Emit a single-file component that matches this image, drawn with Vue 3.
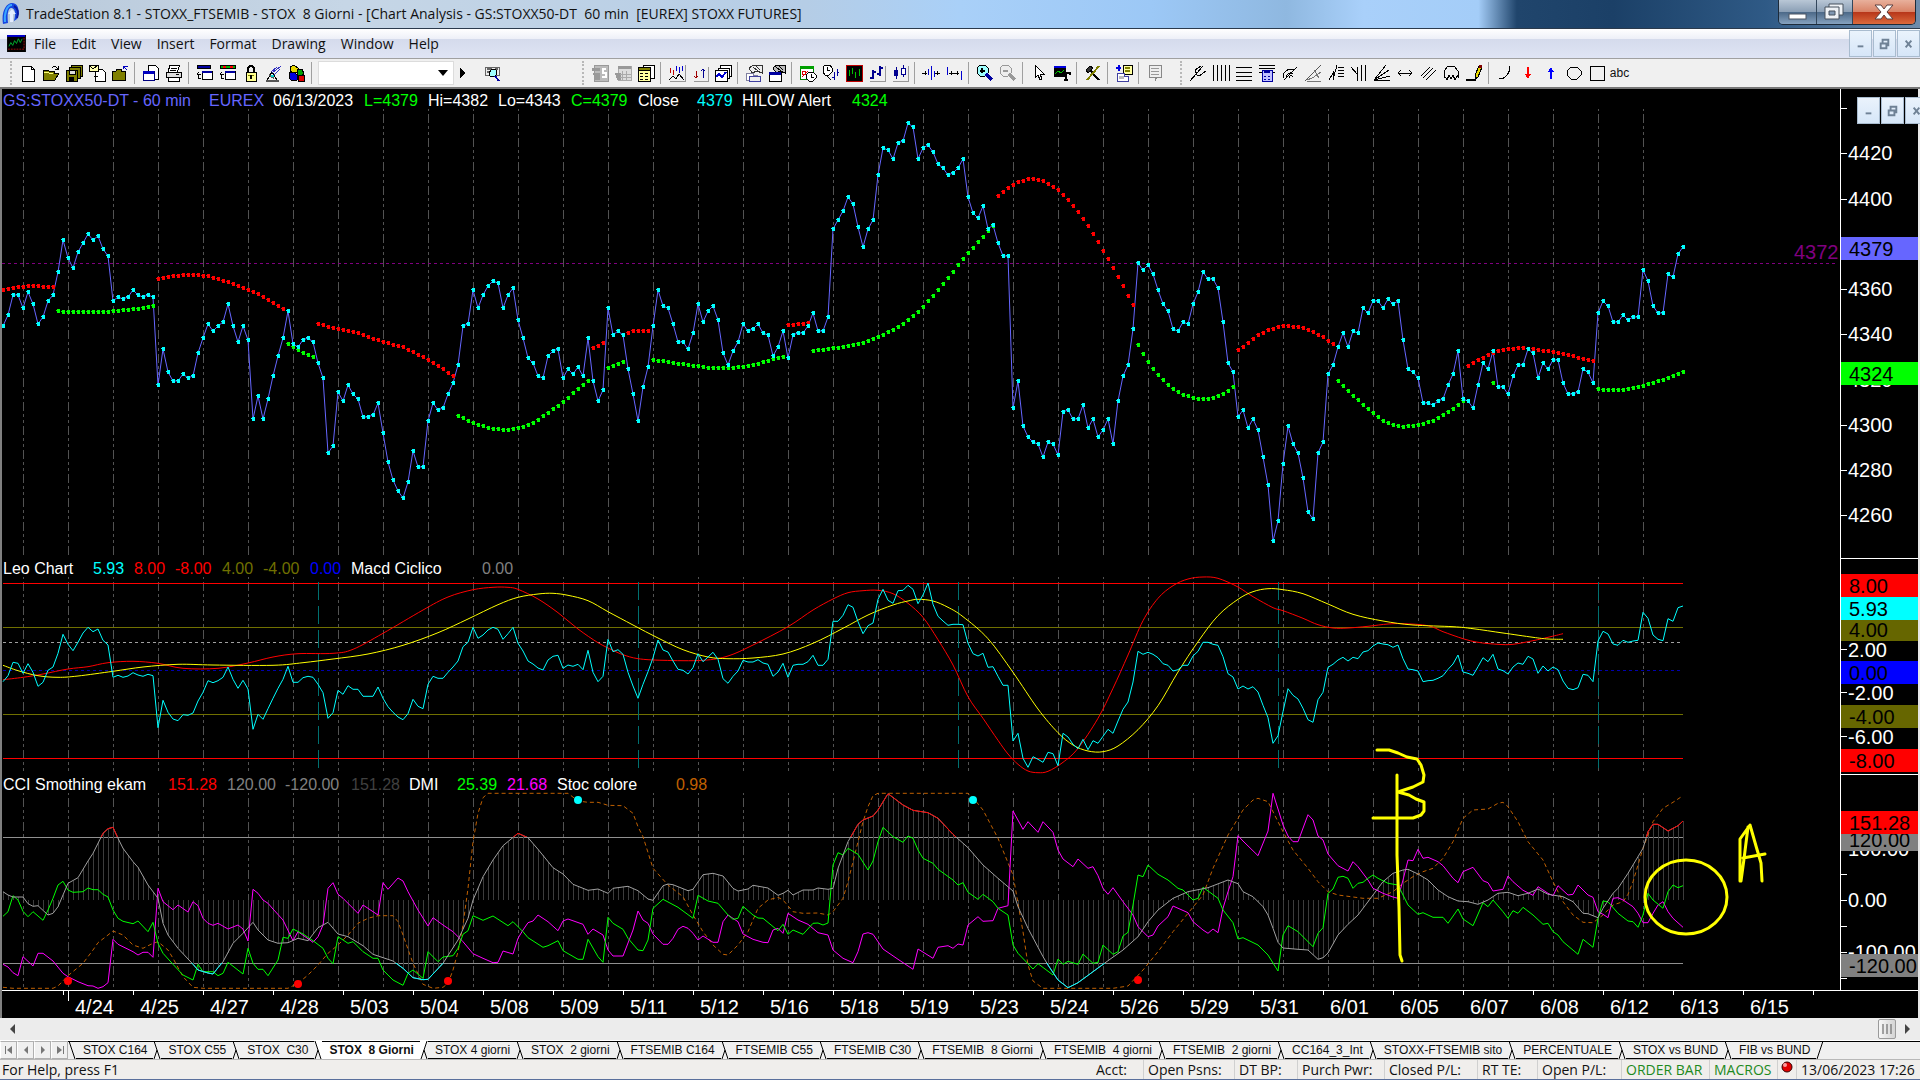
<template>
  <div class="app">
    <!-- title bar -->
    <header class="titlebar">
      <svg class="logo" viewBox="0 0 18 24" aria-hidden="true">
        <path d="M1 22C-1 10 4 1 10 1C17 1 18 10 15 17L12 19C14 11 13 6 9 6C6 6 5 13 6 21Z" fill="#1646e0" />
        <path d="M3 20C2 11 5 3 10 3" fill="none" stroke="#39a5ff" stroke-width="2" />
        <path d="M8 20V12H6L10 7L14 12H11V20Z" fill="#e4ecff" />
        <path d="M12 4C16 6 17 11 15 16" fill="none" stroke="#0a1aa0" stroke-width="2" />
      </svg>
      <h1 class="title">{{ title }}</h1>
      <div class="win-buttons">
        <button class="win-min" aria-label="Minimize">
          <svg viewBox="0 0 38 24"><rect x="10" y="14" width="17" height="5" fill="#fff" stroke="#4b5563" /></svg>
        </button>
        <button class="win-max" aria-label="Restore">
          <svg viewBox="0 0 36 24">
            <path d="M12 4H26V15H12Z" fill="#eef2f6" stroke="#46505c" />
            <path d="M8 7H22V19H8Z" fill="#eef2f6" stroke="#46505c" />
            <path d="M12 11H18V15H12Z" fill="#7f97b2" stroke="#46505c" />
          </svg>
        </button>
        <button class="win-close" aria-label="Close">
          <svg viewBox="0 0 62 24">
            <path d="M22 5H28L31 9L34 5H40L34 12L40 19H34L31 15L28 19H22L28 12Z" fill="#fff" stroke="#5c4040" />
          </svg>
        </button>
      </div>
    </header>

    <!-- menu -->
    <nav class="menubar">
      <svg class="doc-icon" viewBox="0 0 20 18" aria-hidden="true">
        <path d="M0 0H20V18H0Z" fill="#000" />
        <path d="M0 0H19V2H0Z" fill="#0000d0" />
        <path d="M2 12L4 8L6 11L8 6L10 9L12 4L14 8L16 4" fill="none" stroke="#00b030" />
        <path d="M1 15H18V3" fill="none" stroke="#a01010" stroke-dasharray="2 1" />
      </svg>
      <a v-for="m in menus" :key="m" href="#">{{ m }}</a>
      <div class="mdi-buttons">
        <button v-for="b in mdiButtons" :key="b.label" :aria-label="b.label">
          <svg viewBox="0 0 22 26"><path :d="b.d" fill="none" stroke="#6f8296" stroke-width="2" /></svg>
        </button>
      </div>
    </nav>

    <!-- toolbar -->
    <div class="toolbar">
      <template v-for="(group, g) in toolbar" :key="g">
        <span class="grip"></span>
        <template v-for="(name, n) in group" :key="n">
          <span v-if="name === '|'" class="sep"></span>
          <span v-else-if="name === 'combo'" class="combo">
            <select aria-label="Symbol"><option></option></select>
            <svg viewBox="0 0 10 6" aria-hidden="true"><path d="M0 0H10L5 6Z" /></svg>
          </span>
          <button v-else-if="name === 'abc'" class="tool abc">abc</button>
          <button v-else class="tool" :class="name" :aria-label="name">
            <svg viewBox="0 0 18 18" shape-rendering="crispEdges">
              <path
                v-for="(p, i) in icons[name]"
                :key="i"
                :d="p[0]"
                :fill="p[1]"
                :stroke="p[2] || 'none'"
                :stroke-width="p[3] || 1"
              />
            </svg>
          </button>
        </template>
      </template>
    </div>

    <!-- chart -->
    <main class="chart">
      <svg class="plot" viewBox="0 0 1920 929" role="img" aria-label="GS:STOXX50-DT 60 min">
        <defs>
          <clipPath id="above"><rect x="0" y="700" width="1840" height="48" /></clipPath>
          <clipPath id="below"><rect x="0" y="874" width="1840" height="28" /></clipPath>
        </defs>
        <rect width="1920" height="929" fill="#000" />

        <!-- grid -->
        <g stroke="#525252" stroke-dasharray="9 3 3 3 3 3" stroke-dashoffset="19" shape-rendering="crispEdges">
          <template v-for="x in gridX" :key="x">
            <line :x1="x + 0.5" :x2="x + 0.5" y1="20" y2="466" />
            <line :x1="x + 0.5" :x2="x + 0.5" y1="488" y2="683" />
            <line :x1="x + 0.5" :x2="x + 0.5" y1="704" y2="899" />
          </template>
        </g>

        <!-- price pane -->
        <line x1="2" x2="1838" y1="174.5" y2="174.5" stroke="#800080" stroke-dasharray="3 3" />
        <path :d="pricePath" class="line" stroke="#6666ff" />
        <path :d="dots(hiRed, 21)" fill="#ff0000" />
        <path :d="dots(hiGreen, 21)" fill="#00ff00" />
        <path :d="dots(pricePoints, 21)" fill="#00ffff" />
        <text x="1794" y="170" class="axis" fill="#800080">4372</text>

        <!-- Leo Chart pane -->
        <g shape-rendering="crispEdges">
          <line v-for="l in levels" :key="l.y" x1="3" x2="1683" :y1="l.y" :y2="l.y" :stroke="l.color" :stroke-dasharray="l.dash" />
          <line
            v-for="b in [63, 127, 191, 255, 319]"
            :key="b"
            :x1="barX(b) + 0.5"
            :x2="barX(b) + 0.5"
            y1="493"
            y2="680"
            stroke="#007070"
            stroke-dasharray="18 6"
          />
        </g>
        <path :d="smooth(cycleRed)" class="line" stroke="#ff0000" />
        <path :d="smooth(cycleYellow)" class="line" stroke="#ffff00" />
        <path :d="poly(leoPoints)" class="line" stroke="#00ffff" />

        <!-- CCI pane -->
        <path :d="histogram" stroke="#3c3c3c" shape-rendering="crispEdges" />
        <path :d="poly(stoc)" class="line" stroke="#c06000" stroke-dasharray="4 3" />
        <path :d="poly(dmiMinus)" class="line" stroke="#ff00ff" />
        <path :d="poly(dmiPlus)" class="line" stroke="#00ff00" />
        <path :d="poly(cci)" class="line" stroke="#a0a0a0" />
        <path :d="poly(cci)" class="line" stroke="#ff0000" clip-path="url(#above)" />
        <path :d="poly(cci)" class="line" stroke="#00ffff" clip-path="url(#below)" />
        <ellipse v-for="m in markers" :key="m.bar" :cx="barX(m.bar)" :cy="lowY(m.v)" rx="4" ry="4" :fill="m.color" />

        <!-- pane captions -->
        <text v-for="(c, i) in captions" :key="'c' + i" :x="c[0]" :y="c[1]" :fill="c[2]" class="caption">{{ c[3] }}</text>

        <!-- value axis -->
        <g stroke="#fff" shape-rendering="crispEdges">
          <line x1="1840.5" x2="1840.5" y1="0" y2="901" />
          <line x1="1840" x2="1918" y1="469.5" y2="469.5" />
          <line x1="1840" x2="1918" y1="685.5" y2="685.5" />
          <line x1="2" x2="1918" y1="901.5" y2="901.5" />
          <line v-for="y in axisTicks" :key="y" x1="1841" x2="1847" :y1="y" :y2="y" />
        </g>
        <text v-for="a in axisLabels" :key="a[1]" x="1848" :y="a[0] + 7" class="axis" fill="#fff">{{ a[1] }}</text>
        <g v-for="t in axisTags" :key="t.text">
          <rect x="1841" :y="t.y" width="77" height="23" :fill="t.color" />
          <text x="1849" :y="t.y + 19" class="axis" fill="#000">{{ t.text }}</text>
        </g>

        <!-- date axis -->
        <g stroke="#fff" shape-rendering="crispEdges">
          <line v-for="k in 26" :key="k" :x1="k * 70 - 6.5" :x2="k * 70 - 6.5" y1="901" y2="906" />
          <line x1="68.5" x2="68.5" y1="901" y2="912" />
        </g>
        <text v-for="(d, i) in dates" :key="d" :x="i ? 70 + i * 70 : 75" y="925" class="axis" fill="#fff">{{ d }}</text>

        <!-- hand-drawn notes -->
        <g fill="none" stroke="#ffff00" stroke-width="3" stroke-linecap="round" stroke-linejoin="round">
          <path d="M1377 661H1389L1398 664L1407 668L1417 670L1421 676L1424 686L1423 693L1413 698L1398 703L1409 706L1416 710L1424 713V722L1421 726L1413 729H1373" />
          <path d="M1397 686V766L1399 819L1400 866L1402 872" />
          <ellipse cx="1686" cy="808" rx="41" ry="37" />
          <path d="M1740 792V750L1750 736L1756 757L1761 774L1762 792M1741 792L1744 770L1748 738M1743 769L1765 765" />
        </g>

        <rect width="2" height="929" fill="#808080" />
        <rect x="1918" width="2" height="929" fill="#e8e8e8" />
      </svg>
      <div class="mdi-buttons floating">
        <button v-for="b in mdiButtons" :key="b.label" :aria-label="'Chart ' + b.label">
          <svg viewBox="0 0 22 26"><path :d="b.d" fill="none" stroke="#6f8296" stroke-width="2" /></svg>
        </button>
      </div>
    </main>

    <!-- horizontal scroll -->
    <div class="scroll">
      <button aria-label="Scroll left"><svg viewBox="0 0 6 10"><path d="M6 0V10L1 5Z" fill="#444" /></svg></button>
      <span class="track"></span>
      <button class="thumb" aria-label="Scroll position">
        <svg viewBox="0 0 10 10"><path d="M1 0V10M5 0V10M9 0V10" stroke="#555" /></svg>
      </button>
      <button aria-label="Scroll right"><svg viewBox="0 0 6 10"><path d="M0 0V10L5 5Z" fill="#444" /></svg></button>
    </div>

    <!-- workspace tabs -->
    <div class="tabs">
      <button v-for="n in navButtons" :key="n.label" class="nav" :aria-label="n.label">
        <svg viewBox="0 0 10 10"><path :d="n.d" fill="#777" /></svg>
      </button>
      <template v-for="(t, i) in tabs" :key="t">
        <svg class="slant" viewBox="0 0 8 18" aria-hidden="true">
          <path v-if="i === activeTab + 1" d="M0 0H8L1 18H0Z" fill="#fff" />
          <path v-if="i === activeTab" d="M0 0H8V18H7Z" fill="#fff" />
          <path :d="slant(i)" fill="none" stroke="#000" />
        </svg>
        <button class="tab" :class="{ active: i === activeTab }" @click="activeTab = i">{{ t }}</button>
      </template>
      <svg class="slant" viewBox="0 0 8 18" aria-hidden="true"><path d="M7 0L1 18" stroke="#000" /></svg>
    </div>

    <!-- status bar -->
    <footer class="status">
      <span class="help">For Help, press F1</span>
      <span v-for="s in status" :key="s.text" class="cell" :class="s.cls">{{ s.text }}</span>
      <span class="cell ball">
        <svg viewBox="0 0 12 14" aria-hidden="true">
          <circle cx="6" cy="7" r="5" fill="#e00000" stroke="#300" />
          <circle cx="4" cy="5" r="2" fill="#ff9a9a" />
        </svg>
      </span>
      <span class="cell clock">13/06/2023 17:26</span>
    </footer>
  </div>
</template>

<script setup>
import { ref, computed } from 'vue';

const title =
  'TradeStation 8.1 - STOXX_FTSEMIB - STOX  8 Giorni - [Chart Analysis - GS:STOXX50-DT  60 min  [EUREX] STOXX FUTURES]';
const menus = ['File', 'Edit', 'View', 'Insert', 'Format', 'Drawing', 'Window', 'Help'];

const mdiButtons = [
  { label: 'Minimize', d: 'M8 16H14' },
  { label: 'Restore', d: 'M7 13H13V18H7ZM9 12V9H15V15H14' },
  { label: 'Close', d: 'M8 10L14 17M14 10L8 17' },
];

const toolbar = [
  ['new', 'open', 'saveAll', 'mail', 'folder', '|', 'window', 'print', '|', 'stackBlue', 'stackColor', 'lock', 'satellite', 'cubes', '|', 'combo', 'play', 'find'],
  ['dataOff', 'tableOff', 'table', '|', 'indicator', 'arrows', 'strategy', '|', 'formatA', 'formatB', '|', 'calendar', 'clock', 'bars', 'ohlc', 'candle', '|', 'narrow', 'widen', '|', 'zoomIn', 'zoomOut', '|', 'pointer', 'textTool', '|', 'tools', '|', 'addWin', '|', 'note'],
  ['fork', 'vlines', 'hlines', 'calc', 'arc', 'fan', 'retrace', 'timeZones', 'gannFan', 'extend', 'parallel', 'cycle', 'pencil', '|', 'curve', 'arrowDown', 'arrowUp', 'circle', 'square', 'abc'],
];

// every icon is a list of [path, fill, stroke, stroke width]
const icons = {
  new: [['M3 2H12L15 5V17H3Z', '#fff', '#000'], ['M12 2V5H15', 'none', '#000']],
  open: [['M1 15V6H6L7 7H12V9H17L13 16H1Z', '#808000', '#000'], ['M2 8H5L7 9H11', 'none', '#ffff80'], ['M10 4C12 2 14 2 16 5M16 2V5H13', 'none', '#000']],
  saveAll: [['M6 1H17V12H6Z', '#808000', '#000'], ['M4 3H15V14H4Z', '#808000', '#000'], ['M1 6H12V17H1Z', '#808000', '#000'], ['M4 6H10V10H4Z', '#ddd', '#000'], ['M4 13H9V17H4Z', '#000']],
  mail: [['M7 5H14L17 8V17H7Z', '#fff', '#000'], ['M1 1H10V7H1Z', '#ffffb0', '#000'], ['M1 1L5 5L10 1M6 12H10', 'none', '#000']],
  folder: [['M1 7H5L6 5H10V7H14V16H1Z', '#808000', '#000'], ['M12 2H17M12 2V5M12 2L16 6', 'none', '#0000c0']],
  window: [['M6 1H13L16 4V15H6Z', '#fff', '#000'], ['M1 7H12V16H1Z', '#fff', '#000080'], ['M1 7H12V10H1Z', '#0000c0']],
  print: [['M5 1H15L12 8H3Z', '#fff', '#000'], ['M1 8H16V13H1Z', '#ddd', '#000'], ['M3 13H14V17H3Z', '#fff', '#000'], ['M6 4H12M5 6H11M11 10H14', 'none', '#000']],
  stackBlue: [['M1 1H14V4H1Z', '#0000a0', '#000'], ['M6 7H16V15H6Z', '#fff', '#000'], ['M6 7H16V9H6Z', '#0000a0'], ['M5 10H1M3 8L1 10L3 12M2 10V14H5', 'none', '#000']],
  stackColor: [['M1 1H16V4H1Z', '#00b000', '#000'], ['M4 2H7V4H4ZM11 2H14V4H11Z', '#ff0000'], ['M6 7H16V15H6Z', '#fff', '#000'], ['M6 7H16V9H6Z', '#0000a0'], ['M5 10H1M3 8L1 10L3 12M2 10V14H5', 'none', '#000']],
  lock: [['M6 8V4L8 2H10L12 4V8', 'none', '#000', 2], ['M4 8H14V17H4Z', '#ffff90', '#000'], ['M6 11H12V12H6Z', '#808000'], ['M8 11H10V15H8Z', '#000']],
  satellite: [['M2 16L7 8L12 16Z', 'none', '#000'], ['M6 8L12 3M9 11L15 5M7 9L16 2', 'none', '#3030c0'], ['M4 11L9 14M1 17H14', 'none', '#555', 2], ['M6 11H9V13H6Z', '#00d0d0']],
  cubes: [['M2 3L6 1L10 4V8L5 9L2 7Z', '#e8d800', '#000'], ['M9 6L14 5L16 10L12 13L9 11Z', '#00a000', '#000'], ['M1 9L6 8L9 11V16L4 17L1 14Z', '#0000e0', '#000'], ['M10 11H16V17H10Z', '#e00000', '#000']],
  play: [['M6 4L11 9L6 14Z', '#000']],
  find: [['M2 3H16V11H2Z', '#eee', '#666'], ['M4 5H9M4 8H8M12 5H15', 'none', '#666', 2], ['M6 9L9 5L13 6L14 10L11 13L7 12Z', '#a0ffff', '#000'], ['M12 12L16 17', 'none', '#0000a0', 2]],
  dataOff: [['M3 1H17V17H3Z', '#bbb', '#999'], ['M1 4H9V7H1ZM2 9H9V16H4Z', '#999'], ['M15 5H12V9H15V13H11', 'none', '#fff', 2]],
  tableOff: [['M4 2H17V16H4Z', '#ddd', '#aaa'], ['M4 2H17V5H4ZM1 9H7V16H3Z', '#999'], ['M8 7V16M12 7V16M6 10H17M6 13H17', 'none', '#aaa']],
  table: [['M6 1H17V14H6Z', '#fff', '#000'], ['M1 4H13V17H1Z', '#ffffa0', '#000'], ['M1 3H13V6H1Z', '#808000', '#000'], ['M3 9H6M8 9H11M3 12H6M8 12H11M3 15H6M8 15H11', 'none', '#000']],
  indicator: [['M17 1V17H2', 'none', '#999'], ['M2 4V9M5 6V11', 'none', '#c00000'], ['M8 2V7M11 3V9M14 2V7', 'none', '#0000d0'], ['M1 16L5 12L8 15L11 10L16 16', 'none', '#000']],
  arrows: [['M17 3V17H3', 'none', '#999'], ['M5 7V14M3 12L5 14L7 12', 'none', '#a00000'], ['M12 14V5M10 7L12 5L14 7', 'none', '#000090']],
  strategy: [['M6 1H17V12H6Z', '#fff', '#000'], ['M4 4H15V14H4Z', '#fff', '#000'], ['M1 6H13V17H1Z', '#fff', '#000'], ['M2 13L5 10L8 13L12 8', 'none', '#0000d0', 2]],
  formatA: [['M4 4L9 1H17V9L12 7L7 9Z', '#eee', '#333'], ['M1 9H8V11H12V16H1Z', '#fff', '#8080a0'], ['M4 12H15V17H4Z', '#eee', '#4040a0'], ['M8 3L13 7M11 2L15 6', 'none', '#333']],
  formatB: [['M5 4L9 1H17V9L12 7L8 9Z', '#bbb', '#000'], ['M1 8H13V17H1Z', '#fff', '#000'], ['M1 8H13V11H1Z', '#0000a0'], ['M8 3L13 7M11 2L15 6', 'none', '#000']],
  calendar: [['M1 3H14V15H1Z', '#fff', '#008000'], ['M1 2H15V5H1Z', '#00a000'], ['M3 7H6V10H3ZM3 13L9 7', 'none', '#e00000'], ['M10 8H14L17 11V14L14 17H10L7 14V11Z', '#fff', '#000'], ['M12 10V13H15', 'none', '#000']],
  clock: [['M3 1H8L10 4V8L7 11H3L1 8V3Z', '#fff', '#000'], ['M5 3V6H8M4 11L9 16', 'none', '#000'], ['M12 8V16M15 5V12M10 13H12M15 8H17', 'none', '#0000a0']],
  bars: [['M1 1H17V17H1Z', '#000', '#c00000'], ['M4 6V12M7 4V10M10 8V14M14 5V12', 'none', '#00c000']],
  ohlc: [['M17 2V17H2', 'none', '#999'], ['M5 6V15M2 14H5M5 8H8M12 2V12M9 10H12M12 4H15', 'none', '#000090', 2]],
  candle: [['M17 2V17H2', 'none', '#999'], ['M5 3V15M12 1V13', 'none', '#000090'], ['M3 6H7V12H3Z', '#000090'], ['M10 4H14V10H10Z', '#fff', '#000090']],
  narrow: [['M9 2V16', 'none', '#0000d0'], ['M6 5V11M12 7V13', 'none', '#0000d0'], ['M0 9H5M3 7V11M18 9H13M15 7V11', 'none', '#000']],
  widen: [['M2 3V11M16 7V16', 'none', '#0000d0'], ['M4 9H14M6 7V11M12 7V11', 'none', '#000']],
  zoomIn: [['M4 1H9L12 4V9L9 12H4L1 9V4Z', '#a0ffff', '#000'], ['M6 4V9M4 7H9', 'none', '#000', 2], ['M10 10L16 16', 'none', '#0000a0', 3]],
  zoomOut: [['M4 1H9L12 4V9L9 12H4L1 9V4Z', '#eee', '#999'], ['M4 7H9', 'none', '#999', 2], ['M10 10L16 16', 'none', '#999', 3]],
  pointer: [['M5 1V14L8 11L10 16L12 15L10 10H14Z', '#fff', '#000']],
  textTool: [['M1 2H13V13H1Z', '#000'], ['M1 2H13V4H1Z', '#0000e0'], ['M2 10L5 7L8 9L11 6', 'none', '#00c000'], ['M9 9H17V11M13 9V17M11 16H15', 'none', '#000', 2]],
  tools: [['M4 4L15 16', 'none', '#000', 2], ['M15 2L3 16', 'none', '#808000', 2], ['M2 6L6 2L9 4L4 9Z', '#333', '#000']],
  addWin: [['M8 1H17V10H8Z', '#ffffa0', '#000'], ['M10 4H15M10 7H15', 'none', '#808000', 2], ['M1 4H6M4 1V7', 'none', '#0000e0', 2], ['M2 9H9V12H13V17H2Z', '#fff', '#4040a0'], ['M4 12H9V15H4Z', '#bbb']],
  note: [['M3 1H15V13H11L9 17V13H3Z', '#eee', '#888'], ['M5 4H13M5 7H13M5 10H13', 'none', '#999']],
  fork: [['M1 17L8 9M8 9L14 2M6 6L12 2M10 12L17 7M6 6L8 11L10 12', 'none', '#000']],
  vlines: [['M1 1V17M5 1V17M9 1V17M13 1V17M17 1V17', 'none', '#000']],
  hlines: [['M1 3H17M1 8H17M1 12H17M1 16H17', 'none', '#000']],
  calc: [['M1 1H17M1 4H17M1 8H4M14 8H17', 'none', '#000'], ['M4 6H14V17H4Z', '#c0c0ff', '#0000a0'], ['M6 8H12', 'none', '#0000a0', 2], ['M6 12H8M10 12H12M6 15H8M10 15H12', 'none', '#0000a0']],
  arc: [['M2 14C2 6 9 4 13 6M5 14C5 9 10 8 12 10M8 14C8 11 11 11 12 13M3 16L16 3', 'none', '#000']],
  fan: [['M1 17L17 1', 'none', '#555'], ['M3 16L8 14L13 11L17 8M3 17H17M10 6L15 14', 'none', '#777']],
  retrace: [['M2 16L6 9V16L10 1M11 3H17M11 6H17M11 9H17M11 12H17', 'none', '#000']],
  timeZones: [['M1 3L7 10M7 3V17M11 1V17M15 1V17', 'none', '#000']],
  gannFan: [['M1 16L13 1M1 16L16 6M1 16L17 12M1 16H17', 'none', '#000']],
  extend: [['M2 9H16M5 6L2 9L5 12M13 6L16 9L13 12', 'none', '#000']],
  parallel: [['M2 12L11 3M4 14L14 4M7 16L17 6', 'none', '#000']],
  cycle: [['M2 14V7L6 2H12L16 7V14M2 11L5 16L7 11L9 15L11 11L13 16L16 11', 'none', '#000']],
  pencil: [['M10 11L14 2L17 3L13 13L10 15Z', '#e8d800', '#000'], ['M14 1H17V4H14Z', '#800000'], ['M1 16H10L11 14', 'none', '#000', 2]],
  curve: [['M14 2C14 9 10 15 3 15', 'none', '#000']],
  arrowDown: [['M8 3H10V10H12L9 15L6 10H8Z', '#ff0000']],
  arrowUp: [['M8 15H10V8H12L9 3L6 8H8Z', '#0000ff']],
  circle: [['M6 3H12L16 7V11L12 15H6L2 11V7Z', 'none', '#000']],
  square: [['M2 2H16V16H2Z', 'none', '#000']],
};

const navButtons = [
  { label: 'First', d: 'M1 1H2V9H1ZM8 1V9L3 5Z' },
  { label: 'Previous', d: 'M7 1V9L3 5Z' },
  { label: 'Next', d: 'M3 1V9L7 5Z' },
  { label: 'Last', d: 'M2 1V9L7 5ZM8 1H9V9H8Z' },
];

const activeTab = ref(3);
const tabs = [
  'STOX C164', 'STOX C55', 'STOX  C30', 'STOX  8 Giorni', 'STOX 4 giorni', 'STOX  2 giorni',
  'FTSEMIB C164', 'FTSEMIB C55', 'FTSEMIB C30', 'FTSEMIB  8 Giorni', 'FTSEMIB  4 giorni', 'FTSEMIB  2 giorni',
  'CC164_3_Int', 'STOXX-FTSEMIB sito', 'PERCENTUALE', 'STOX vs BUND', 'FIB vs BUND',
];

// the tab on top shows its whole edge, its neighbour only the lower half
const slant = (i) => {
  if (i === 0) return 'M1 0L7 18';
  if (i === activeTab.value + 1) return 'M7 0L1 18M4 9L7 18';
  return 'M1 0L7 18M4 9L1 18';
};

const status = [
  { text: 'Acct:', cls: 'acct' },
  { text: 'Open Psns:', cls: 'psns' },
  { text: 'DT BP:', cls: 'dtbp' },
  { text: 'Purch Pwr:', cls: 'purch' },
  { text: 'Closed P/L:', cls: 'closed' },
  { text: 'RT TE:', cls: 'rtte' },
  { text: 'Open P/L:', cls: 'openpl' },
  { text: 'ORDER BAR', cls: 'order' },
  { text: 'MACROS', cls: 'macros' },
];

const dates = [
  '4/24', '4/25', '4/27', '4/28', '5/03', '5/04', '5/08', '5/09', '5/11', '5/12', '5/16', '5/18', '5/19',
  '5/23', '5/24', '5/26', '5/29', '5/31', '6/01', '6/05', '6/07', '6/08', '6/12', '6/13', '6/15',
];

// scales: one bar every 5px, vertical samples are thirds of a pixel
const barX = (i) => 3 + 5 * i;
const lowY = (v) => 466 + v / 3;
const gridX = Array.from({ length: 37 }, (_, k) => 23 + 45 * k);

const price = [
  648, 615, 555, 555, 594, 546, 582, 642, 621, 573, 555, 486, 390, 444, 474, 426, 399, 372, 390, 378, 417, 438,
  573, 561, 567, 561, 540, 555, 561, 555, 561, 825, 717, 786, 813, 813, 792, 804, 798, 729, 684, 642, 663, 648,
  636, 582, 648, 696, 648, 690, 927, 858, 927, 867, 798, 738, 684, 603, 702, 711, 690, 684, 696, 759, 804, 1029,
  1008, 846, 873, 825, 852, 867, 921, 921, 915, 879, 969, 1056, 1110, 1143, 1164, 1116, 1023, 1071, 1071, 933,
  879, 900, 894, 852, 819, 765, 648, 642, 540, 594, 555, 528, 513, 519, 594, 555, 534, 630, 684, 744, 759, 798,
  804, 738, 723, 717, 804, 777, 792, 771, 798, 684, 813, 873, 840, 594, 675, 663, 675, 777, 852, 933,
  831, 771, 648, 540, 588, 594, 642, 696, 696, 717, 669, 582, 636, 603, 588, 630, 729, 765, 723, 696, 642, 663,
  657, 642, 669, 675, 738, 711, 663, 744, 675, 669, 669, 648, 609, 663, 663, 621, 357, 330, 303, 261, 282, 351,
  411, 357, 330, 195, 114, 120, 147, 99, 93, 39, 51, 147, 114, 105, 126, 162, 174, 195, 189, 174, 147, 261, 309,
  324, 288, 357, 345, 399, 438, 438, 894, 813, 948, 981, 996, 1002, 1041, 996, 1002, 1035, 906, 900, 927, 927,
  885, 954, 927, 981, 960, 927, 1002, 873, 798, 765, 657, 459, 480, 465, 492, 540, 582, 603, 657, 663, 636, 642,
  582, 546, 486, 507, 507, 534, 636, 759, 786, 921, 900, 954, 927, 960, 1041, 1125, 1293, 1233,
  1062, 948, 1002, 1029, 1104, 1206, 1227, 1029, 996, 792, 765, 711, 669, 711, 663, 669, 594, 609, 573, 573, 594,
  567, 582, 573, 690, 777, 786, 804, 879, 879, 885, 873, 867, 825, 792, 723, 867, 873, 894, 825, 759, 777, 723,
  831, 831, 852, 798, 765, 765, 717, 729, 804, 759, 777, 750, 750, 819, 852, 852, 846, 777, 786, 819, 609, 573,
  588, 636, 636, 615, 630, 621, 621, 480, 513, 588, 609, 609, 492, 501, 432, 411,
];

const leo = [
  380, 362, 322, 325, 355, 326, 352, 394, 382, 346, 336, 295, 238, 268, 287, 262, 234, 217, 230, 222, 256, 270,
  367, 361, 367, 363, 353, 360, 364, 358, 362, 518, 436, 472, 492, 497, 479, 481, 474, 438, 412, 377, 383, 377,
  367, 336, 373, 400, 376, 402, 523, 478, 493, 461, 430, 400, 373, 334, 382, 382, 368, 364, 367, 388, 413, 490,
  473, 406, 418, 392, 403, 403, 424, 424, 424, 396, 430, 455, 472, 486, 494, 476, 433, 454, 461, 388, 364, 370,
  370, 352, 336, 318, 275, 262, 217, 250, 240, 225, 217, 223, 253, 236, 217, 265, 288, 318, 327, 339, 345, 315,
  304, 301, 340, 330, 334, 328, 344, 286, 352, 380, 364, 253, 290, 284, 298, 352, 393, 430,
  388, 350, 308, 255, 285, 291, 318, 343, 346, 357, 338, 296, 320, 306, 292, 313, 371, 385, 364, 348, 316, 321,
  321, 314, 324, 328, 364, 351, 325, 367, 331, 328, 328, 320, 301, 331, 331, 313, 199, 199, 181, 149, 157, 200,
  236, 212, 204, 133, 103, 136, 145, 107, 106, 91, 103, 146, 120, 84, 148, 184, 198, 211, 208, 208, 209, 265,
  296, 303, 295, 337, 335, 364, 391, 391, 558, 535, 610, 637, 605, 613, 622, 592, 596, 632, 535, 546, 568, 581,
  553, 584, 557, 565, 544, 523, 535, 498, 463, 441, 381, 289, 298, 292, 298, 308, 326, 331, 348, 344, 331, 331,
  303, 289, 262, 262, 268, 271, 305, 356, 366, 402, 393, 402, 395, 411, 451, 488, 565, 542,
  470, 401, 421, 432, 460, 494, 502, 434, 412, 337, 328, 315, 307, 318, 307, 311, 291, 287, 273, 264, 267, 269,
  277, 270, 311, 342, 344, 348, 380, 377, 376, 370, 362, 343, 327, 300, 351, 355, 361, 335, 308, 320, 298, 342,
  347, 357, 336, 324, 328, 304, 312, 355, 333, 348, 336, 344, 378, 400, 404, 398, 358, 361, 380, 258, 229, 237,
  267, 271, 256, 262, 258, 256, 172, 190, 240, 253, 257, 191, 199, 158, 153,
];

// "bar:value bar:value ..." -> [[bar, value], ...]
const parse = (s) => s.trim().split(/\s+/).map((p) => p.split(':').map(Number));

// fill the bars between the given ones
const fill = (knots) => {
  const out = [];
  for (let k = 0; k < knots.length - 1; k++) {
    const [a, va] = knots[k];
    const [b, vb] = knots[k + 1];
    for (let i = a; i < b; i++) out.push([i, va + ((vb - va) * (i - a)) / (b - a)]);
  }
  out.push(knots[knots.length - 1]);
  return out;
};

const hiRed = [
  '0:540 3:531 5:528 7:528 8:531 10:531',
  '31:507 34:498 36:495 39:495 41:498 43:507 46:522 50:545 52:561 54:579 56:597',
  '63:642 67:657 71:670 76:696 80:711 84:741 87:768 90:798',
  '118:714 120:699',
  '125:669 126:663 129:663',
  '157:645 159:642 160:642 161:639',
  '199:258 201:234 203:216 205:207 206:207 208:212 210:230 211:240 213:270 215:306 217:348 219:396 221:447 223:501 226:585',
  '247:720 249:699 251:675 253:660 255:651 256:648 258:650 260:654 262:666 264:681 265:693 266:702',
  '293:768 295:750 297:735 299:723 301:717 303:714 304:714 307:720 310:725 313:735 316:747 318:753',
].flatMap((s) => fill(parse(s)));

const hiGreen = [
  '11:603 13:606 21:606 24:600 28:594 30:588',
  '57:702 60:729 62:741',
  '91:918 94:939 97:954 100:960 101:960 104:951 106:939 109:909 112:876 115:837 117:813',
  '121:774 124:756',
  '130:750 133:756 137:765 141:773 145:774 148:771 151:762 154:747 156:741',
  '162:723 165:717 168:711 172:699 176:675 180:642 183:606 186:558 189:504 192:447 195:396 197:363 198:348',
  '227:705 228:732 230:777 232:810 234:837 236:855 239:867 241:867 243:858 245:843 246:831',
  '267:813 270:858 273:897 276:933 278:945 280:951 283:945 286:933 288:915 290:897 292:873',
  '298:819',
  '319:837 320:840 324:840 327:831 330:819 333:804 336:786',
].flatMap((s) => fill(parse(s)));

const cycleRed = parse(`
  0:374 4:367 8:357 13:342 17:335 21:323 26:319 31:325 36:340 43:340 49:324 54:306 59:296 66:295 70:283 76:235
  84:165 89:126 94:104 98:97 101:97 103:103 107:132 111:173 115:222 119:263 122:286 124:299 127:311 132:316
  140:316 145:303 150:270 157:215 162:165 166:132 169:113 172:107 175:106 178:116 181:145 184:187 187:254
  190:330 193:425 196:490 199:556 201:597 203:628 205:648 207:653 209:649 212:622 215:580 219:490 222:400
  225:300 228:197 231:130 234:92 237:72 240:66 243:70 247:96 250:125 254:158 256:167 260:190 263:209 266:219
  269:219 273:214 277:207 280:206 285:212 288:230 292:251 295:262 299:268 302:268 306:257 309:247 312:236`);

const cycleYellow = parse(`
  0:331 3:347 7:362 11:367 15:363 22:349 28:336 35:328 42:330 54:331 60:323 66:312 73:297 80:271 87:233 93:192
  99:149 103:127 107:117 110:115 113:121 117:137 121:170 126:210 131:249 136:284 141:306 145:311 150:309
  156:297 162:265 168:220 173:180 178:150 181:138 183:133 186:138 189:157 192:185 197:251 202:352 207:462
  211:533 214:570 217:588 220:590 223:573 227:524 231:452 235:351 239:260 243:182 247:133 250:110 253:101
  256:104 260:116 265:147 270:178 276:198 282:210 290:215 294:221 300:234 306:247 309:252 312:253`);

const cci = parse(`
  0:1010 1:1020 2:1026 4:1026 5:1046 6:1054 7:1052 9:1080 10:1075 11:1055 13:985 15:968 17:918 18:895 20:835
  21:821 22:817 23:850 24:880 26:920 27:937 29:990 31:1030 32:1105 33:1140 35:1180 38:1228 39:1245 41:1254
  42:1257 43:1238 44:1220 46:1165 48:1135 50:1102 51:1125 53:1155 55:1165 57:1163 59:1150 61:1157 63:1118
  65:1102 67:1137 69:1145 72:1172 74:1198 78:1218 80:1240 82:1268 84:1274 85:1273 88:1225 91:1155 93:1090
  94:1035 96:965 98:915 100:872 103:835 105:848 107:883 110:938 112:957 114:988 117:1006 119:1002 121:1015
  122:1000 125:994 127:1007 129:1032 130:1036 132:992 133:987 134:989 137:1007 138:1003 140:959 142:955
  144:963 146:1000 147:1008 149:1002 150:991 153:999 155:1021 156:1015 157:1006 158:1020 160:1005 162:1005
  163:999 165:1003 166:1000 167:940 169:860 171:808 172:795 174:783 175:765 177:716 180:750 182:766 185:773
  187:790 190:838 193:878 196:930 199:970 202:1008 203:1055 205:1120 208:1205 209:1230 211:1275 213:1298
  215:1283 218:1250 221:1217 224:1185 227:1145 229:1100 231:1065 234:1030 237:1010 241:998 245:975 247:986
  248:1010 250:1025 252:1055 253:1080 254:1120 255:1162 256:1179 259:1183 261:1185 263:1213 264:1208 265:1194
  267:1140 269:1108 271:1080 273:1040 275:1000 276:980 278:955 280:945 281:943 283:957 285:975 287:1005
  289:1025 291:1038 293:1040 295:1048 297:1035 299:1015 301:1012 303:1022 305:1015 307:1002 309:1018 312:1025
  314:1040 316:1075 317:1076 319:1088 320:1060 322:1015 323:1000 325:955 328:880 329:830 330:808 331:808
  333:828 335:812 336:798`);

const dmiPlus = parse(`
  0:1084 1:1070 2:1022 3:1035 4:1069 5:1085 6:1070 8:1096 9:1065 10:1030 11:990 12:979 13:1005 14:1012 16:1010
  17:999 18:1004 19:1004 20:1018 21:1026 22:1065 23:1090 24:1099 26:1106 27:1098 29:1130 30:1102 31:1165
  32:1195 34:1228 36:1260 38:1275 39:1228 40:1250 42:1250 43:1262 44:1255 45:1222 48:1257 49:1180 50:1225
  51:1243 52:1243 53:1262 55:1215 56:1147 57:1150 58:1122 60:1137 62:1157 64:1180 65:1210 66:1226 67:1145
  69:1165 70:1160 72:1190 74:1210 75:1210 76:1245 78:1275 80:1291 81:1255 82:1245 84:1270 85:1190 87:1220
  88:1206 90:1202 91:1180 92:1138 93:1127 94:1082 96:1096 98:1083 101:1112 102:1100 104:1130 105:1148 108:1177
  109:1172 111:1157 112:1187 115:1213 116:1213 117:1153 119:1205 120:1222 121:1087 122:1105 124:1123 125:1150
  127:1185 128:1187 129:1155 130:1060 132:1033 135:1057 138:1090 139:1021 141:1038 143:1045 145:1080 146:1093
  147:1090 148:1054 150:1080 151:1089 152:1090 155:1127 156:1108 157:1138 158:1125 160:1138 162:1105 163:1104
  164:1110 165:1104 166:930 167:893 168:900 169:880 171:898 173:945 174:918 175:860 176:817 178:845 180:862
  181:843 182:850 183:885 184:910 186:925 187:943 190:975 191:990 192:983 193:1012 195:1033 196:1018 198:1040
  199:1060 201:1080 202:1170 203:1195 206:1242 207:1226 210:1260 211:1212 212:1228 213:1219 215:1228 216:1197
  218:1225 219:1222 220:1170 222:1198 223:1190 224:1143 225:1132 226:1050 227:960 228:965 229:930 231:958
  233:975 235:1000 236:1005 238:1035 239:1030 240:997 243:1030 244:1065 246:1103 247:1152 248:1148 251:1170
  253:1200 255:1248 256:1140 257:1112 259:1130 262:1175 263:1135 264:1118 265:1015 266:1002 267:967 268:964
  269:970 270:1000 271:985 272:982 273:970 274:960 275:970 277:985 279:990 280:1020 281:1050 283:1078 284:1073
  286:1087 288:1087 289:1105 291:1062 292:1092 294:1112 296:1043 297:1055 298:1035 300:1070 301:1090 302:1067
  303:1075 304:1057 306:1080 308:1108 309:1105 310:1130 311:1140 312:1160 315:1198 316:1153 318:1177 319:1090
  320:1038 321:1040 323:1075 325:1098 326:1100 327:1117 328:1080 329:1015 330:1035 332:1060 333:1010 334:990
  335:998 336:992`);

const dmiMinus = parse(`
  0:1228 1:1236 2:1253 3:1262 4:1205 6:1233 7:1195 8:1195 10:1218 12:1255 13:1265 15:1280 17:1292 18:1293
  19:1300 20:1295 21:1283 22:1153 23:1168 26:1190 27:1200 28:1192 29:1192 30:1207 31:1000 32:1040 34:1064
  35:1050 37:1071 38:1040 39:1052 40:1090 41:1105 42:1111 43:1105 45:1122 47:1110 48:1122 49:1158 50:1003
  51:1015 52:1035 53:1045 54:1062 56:1095 58:1157 59:1130 62:1162 63:1145 64:1110 65:1000 66:983 67:1018
  68:1030 70:1060 71:1075 72:1050 75:1080 76:983 77:1003 79:969 80:978 81:1010 83:1065 85:1113 86:1088 88:1110
  90:1130 92:1160 94:1196 96:1210 98:1223 99:1222 100:1188 102:1197 103:1150 104:1125 105:1103 106:1098
  107:1080 109:1100 111:1127 112:1098 113:1092 116:1108 117:1138 118:1122 120:1140 121:1185 122:1203 124:1203
  126:1125 127:1068 128:1095 129:1105 130:1137 132:1168 133:1168 134:1150 135:1123 136:1114 137:1120 138:1135
  139:1155 140:1143 142:1162 143:1162 144:1100 145:1080 147:1100 148:1137 150:1153 152:1162 153:1163 154:1125
  155:1120 156:1135 157:1075 159:1095 161:1108 163:1133 165:1140 166:1185 168:1210 170:1223 171:1190 172:1137
  173:1133 174:1138 176:1182 179:1213 182:1243 183:1182 186:1210 187:1177 189:1172 190:1180 191:1167 192:1170
  193:1110 195:1085 196:1099 198:1097 199:1060 201:1052 202:768 204:823 205:800 207:832 208:800 210:832
  211:885 212:912 214:935 215:912 217:940 218:935 219:962 220:1000 221:1018 222:998 224:1040 226:1080 227:1115
  229:1145 230:1140 231:1113 233:1085 234:1053 237:1073 238:1100 240:1125 241:1135 242:1122 243:1133 244:1060
  245:1010 246:965 247:842 248:858 251:902 253:828 254:715 255:762 256:810 257:843 258:860 259:860 261:779
  262:795 263:843 264:855 265:897 267:932 269:948 270:920 271:935 273:975 274:1000 276:1015 278:1026 279:1030
  280:975 281:915 282:917 283:883 284:910 285:907 287:920 288:932 290:970 291:983 292:950 294:937 296:977
  297:983 298:1008 300:1003 301:963 302:980 304:1006 306:1021 307:995 309:1015 310:1022 311:992 313:1020
  314:1018 315:990 317:1020 318:1027 319:1070 320:1078 321:1088 322:1030 323:1028 324:1035 326:1055 327:1075
  328:1103 329:1103 330:1075 331:1050 332:1040 333:1070 334:1090 336:1117`);

const stoc = parse(`
  0:1297 2:1300 10:1300 11:1293 13:1262 16:1225 18:1185 19:1163 21:1140 22:1128 24:1140 26:1170 28:1180 30:1165
  31:1160 33:1185 34:1210 36:1265 38:1297 40:1300 57:1300 59:1285 61:1260 63:1230 65:1195 67:1170 69:1140
  71:1105 73:1090 75:1082 78:1082 79:1100 80:1140 82:1225 84:1288 86:1300 88:1297 89:1285 90:1245 91:1190
  92:1110 93:1000 94:860 95:775 96:728 97:715 113:715 115:738 117:742 119:742 121:751 124:752 126:775 127:815
  128:845 130:940 133:990 136:1025 138:1080 140:1130 142:1170 144:1198 145:1200 147:1170 149:1130 151:1060
  153:1035 155:1027 156:1035 158:1070 160:1075 163:1074 165:1080 166:1070 168:1030 169:980 170:920 171:860
  172:800 173:755 174:722 175:715 193:715 194:728 196:765 199:850 202:960 204:1130 205:1230 206:1278 208:1300
  222:1300 225:1293 228:1245 231:1190 234:1130 237:1075 240:1020 242:940 245:840 248:765 250:735 251:730
  253:740 255:800 256:830 258:885 261:940 263:980 265:1010 267:1020 272:1030 275:1030 278:1010 280:985 282:965
  284:950 286:940 288:910 290:860 292:790 294:765 297:762 299:745 300:742 301:755 303:800 305:860 308:915
  310:980 312:1040 314:1080 316:1102 318:1103 320:1080 322:1050 324:1040 325:1018 326:980 327:930 328:880
  330:800 332:760 334:742 336:722`);

const pricePoints = price.map((v, i) => [i, v]);
const leoPoints = leo.map((v, i) => [i, v]);

const r = (n) => Math.round(n * 10) / 10;
const line = (pts, top) => 'M' + pts.map(([i, v]) => `${barX(i)} ${r(top + v / 3)}`).join('L');
const poly = (pts) => line(pts, 466);
const pricePath = line(pricePoints, 21);

// a 3x4 block with one pixel sticking out to the left
const dots = (pts, top) =>
  pts.map(([i, v]) => `M${barX(i) - 1} ${Math.round(top + v / 3) - 2}h3v4h-3v-2h-1v-1h1z`).join('');

// curve through all points
const smooth = (pts) => {
  const p = pts.map(([i, v]) => [barX(i), lowY(v)]);
  let d = `M${p[0][0]} ${r(p[0][1])}`;
  for (let k = 0; k < p.length - 1; k++) {
    const a = p[k - 1] || p[k];
    const b = p[k];
    const c = p[k + 1];
    const e = p[k + 2] || c;
    d += `C${r(b[0] + (c[0] - a[0]) / 6)} ${r(b[1] + (c[1] - a[1]) / 6)} `;
    d += `${r(c[0] - (e[0] - b[0]) / 6)} ${r(c[1] - (e[1] - b[1]) / 6)} ${r(c[0])} ${r(c[1])}`;
  }
  return d;
};

const histogram = computed(() =>
  fill(cci).map(([i, v]) => `M${barX(i) + 0.5} 811V${Math.round(lowY(v))}`).join(''),
);

const levels = [
  { y: 494.5, color: '#ff0000' },
  { y: 538.5, color: '#707000' },
  { y: 553.5, color: '#a0a0a0', dash: '3 3' },
  { y: 581.5, color: '#0000b0', dash: '3 3' },
  { y: 625.5, color: '#707000' },
  { y: 669.5, color: '#ff0000' },
  { y: 748.5, color: '#909090' },
  { y: 874.5, color: '#909090' },
];

const markers = [
  { bar: 13, v: 1278, color: '#ff0000' },
  { bar: 59, v: 1287, color: '#ff0000' },
  { bar: 89, v: 1278, color: '#ff0000' },
  { bar: 227, v: 1275, color: '#ff0000' },
  { bar: 115, v: 735, color: '#00ffff' },
  { bar: 194, v: 735, color: '#00ffff' },
];

const captions = [
  [3, 17, '#6666ff', 'GS:STOXX50-DT - 60 min'],
  [209, 17, '#6666ff', 'EUREX'],
  [273, 17, '#fff', '06/13/2023'],
  [364, 17, '#00ff00', 'L=4379'],
  [428, 17, '#fff', 'Hi=4382'],
  [498, 17, '#fff', 'Lo=4343'],
  [571, 17, '#00ff00', 'C=4379'],
  [638, 17, '#fff', 'Close'],
  [697, 17, '#00ffff', '4379'],
  [742, 17, '#fff', 'HILOW Alert'],
  [852, 17, '#00ff00', '4324'],
  [3, 485, '#fff', 'Leo Chart'],
  [93, 485, '#00ffff', '5.93'],
  [134, 485, '#ff0000', '8.00'],
  [175, 485, '#ff0000', '-8.00'],
  [222, 485, '#707000', '4.00'],
  [263, 485, '#707000', '-4.00'],
  [310, 485, '#0000ff', '0.00'],
  [351, 485, '#fff', 'Macd Ciclico'],
  [482, 485, '#808080', '0.00'],
  [3, 701, '#fff', 'CCI Smothing ekam'],
  [168, 701, '#ff0000', '151.28'],
  [227, 701, '#808080', '120.00'],
  [285, 701, '#808080', '-120.00'],
  [351, 701, '#404040', '151.28'],
  [409, 701, '#fff', 'DMI'],
  [457, 701, '#00ff00', '25.39'],
  [507, 701, '#ff00ff', '21.68'],
  [557, 701, '#fff', 'Stoc colore'],
  [676, 701, '#c06000', '0.98'],
];

const axisLabels = [
  [64, '4420'], [110, '4400'], [200, '4360'], [245, '4340'], [291, '4320'], [336, '4300'], [381, '4280'], [426, '4260'],
  [561, '2.00'], [604, '-2.00'], [648, '-6.00'], [760, '100.00'], [811, '0.00'], [863, '-100.00'],
];
const axisTicks = [19.5, 64.5, 110.5, 200.5, 245.5, 336.5, 381.5, 426.5, 560.5, 603.5, 647.5, 785.5, 811.5, 837.5, 863.5, 889.5];

const axisTags = [
  { y: 148, color: '#6666ff', text: '4379' },
  { y: 273, color: '#00ff00', text: '4324' },
  { y: 529, color: '#666600', text: '4.00' },
  { y: 485, color: '#ff0000', text: '8.00' },
  { y: 508, color: '#00ffff', text: '5.93' },
  { y: 572, color: '#0000ff', text: '0.00' },
  { y: 616, color: '#666600', text: '-4.00' },
  { y: 660, color: '#ff0000', text: '-8.00' },
  { y: 739, color: '#808080', text: '120.00' },
  { y: 722, color: '#ff0000', text: '151.28' },
  { y: 865, color: '#808080', text: '-120.00' },
];
</script>

<style>
body {
  background: #f0eeec;
  overflow: hidden;
}
</style>

<style scoped>
.app {
  display: flex;
  flex-direction: column;
  font-family: 'Open Sans', 'Noto Sans', sans-serif;
  font-size: 14px;
  color: #111;
  border-bottom: 1px solid #5a6f9c;
}
button {
  border: 0;
  padding: 0;
  margin: 0;
  background: none;
  font: inherit;
  color: inherit;
}
svg {
  display: block;
}

/* title bar */
.titlebar {
  display: flex;
  align-items: center;
  height: 28px;
  padding: 0 4px 0 2px;
  border-bottom: 1px solid #2b3a4c;
  background:
    linear-gradient(90deg, #b9c9da 0%, #c6d6e6 18%, #b5cde6 42%, #a9d0f8 50%, #9cc8f6 60%, #8fb8e0 67%, #a9d0fa 71%, #a4cdf8 77%, #20456c 79%, #1b4067 84%, #2f5a86 92%, #6f8dac 100%);
}
.logo {
  width: 18px;
  height: 24px;
  margin-right: 6px;
}
.title {
  flex: 1;
  margin: 0;
  font-size: 14px;
  font-weight: 400;
  line-height: 28px;
  white-space: pre;
}
.win-buttons {
  display: flex;
  align-self: flex-start;
  border: 1px solid #1d2b3a;
  border-top: 0;
  border-radius: 0 0 5px 5px;
  overflow: hidden;
}
.win-buttons button {
  height: 24px;
  background: linear-gradient(#b9c7d6 0%, #8ca0b6 48%, #4d6a89 52%, #86a2bf 100%);
  border-right: 1px solid #33475c;
}
.win-buttons svg {
  height: 24px;
}
.win-min {
  width: 38px;
}
.win-max {
  width: 36px;
}
.win-buttons .win-close {
  width: 62px;
  border-right: 0;
  background: linear-gradient(#e8b09c 0%, #d98468 48%, #b8371a 52%, #dc6a3c 100%);
}

/* menu */
.menubar {
  display: flex;
  align-items: center;
  gap: 15px;
  height: 29px;
  padding-left: 7px;
  border-bottom: 1px solid #a0a0a0;
  background: linear-gradient(#fff 0%, #eef0f8 33%, #d5dbec 36%, #dfe4f4 100%);
}
.menubar a {
  color: #111;
  text-decoration: none;
}
.doc-icon {
  width: 19px;
  height: 17px;
  margin-right: -7px;
}
.mdi-buttons {
  display: flex;
  gap: 1px;
  margin-left: auto;
}
.mdi-buttons button {
  width: 23px;
  height: 27px;
  border: 1px solid #a9bccf;
  background: linear-gradient(#eaf3fc, #d6e6f8);
}
.mdi-buttons svg {
  width: 21px;
  height: 25px;
}

/* toolbar */
.toolbar {
  display: flex;
  align-items: center;
  height: 28px;
  border-bottom: 2px solid #777;
  background: #f0f0f0;
}
.grip {
  flex: 0 0 4px;
  height: 24px;
  margin-right: 2px;
  margin-left: 10px;
  border-left: 2px dotted #b8b8b8;
  box-sizing: border-box;
}
.find + .grip {
  margin-left: 79px;
}
.note + .grip {
  margin-left: 14px;
}
.sep {
  flex: 0 0 8px;
  height: 22px;
  background: linear-gradient(#a0a0a0, #a0a0a0) 3px 0 / 1px 100% no-repeat;
}
.tool {
  flex: 0 0 23px;
  display: flex;
  align-items: center;
  justify-content: center;
  height: 24px;
}
.tool svg {
  width: 18px;
  height: 18px;
}
.play {
  flex-basis: 16px;
  margin-right: 8px;
}
.abc {
  font: 12px 'Liberation Sans', Arial, sans-serif;
}
.combo {
  position: relative;
  flex: 0 0 136px;
  margin-left: 2px;
}
.combo select {
  display: block;
  width: 100%;
  height: 24px;
  border: 1px solid #dcdcdc;
  background: #fff;
  appearance: none;
}
.combo svg {
  position: absolute;
  right: 6px;
  top: 9px;
  width: 10px;
  height: 6px;
}

/* chart */
.chart {
  position: relative;
  overflow: hidden;
}
.plot {
  width: 100%;
  height: auto;
}
.line {
  fill: none;
  stroke-width: 1;
}
.caption {
  font: 16px 'Liberation Sans', Arial, sans-serif;
}
.axis {
  font: 20px 'Liberation Sans', Arial, sans-serif;
}
.floating {
  position: absolute;
  top: 8px;
  right: -8px;
}

/* scroll bar */
.scroll {
  display: flex;
  align-items: center;
  height: 22px;
  border-bottom: 1px solid #fff;
  background: #ececec;
}
.scroll button {
  display: flex;
  align-items: center;
  justify-content: center;
  width: 24px;
  height: 20px;
}
.scroll svg {
  width: 6px;
  height: 10px;
}
.track {
  flex: 1;
}
.scroll .thumb {
  width: 18px;
  border: 1px solid #9a9a9a;
  border-radius: 2px;
  background: linear-gradient(90deg, #f6f6f6, #d4d4d4);
}
.scroll .thumb svg {
  width: 10px;
}

/* tabs */
.tabs {
  display: flex;
  height: 18px;
  background: #f0f0f0;
  font: 12px 'Liberation Sans', Arial, sans-serif;
  box-shadow: inset 0 1px #000;
}
.nav {
  display: flex;
  align-items: center;
  justify-content: center;
  width: 17px;
  border: 1px solid #b0b0b0;
  border-left-color: #fff;
  box-sizing: border-box;
}
.nav svg {
  width: 10px;
  height: 10px;
}
.slant {
  flex: none;
  width: 8px;
  height: 18px;
}
.tab {
  padding: 0 6px 0 7px;
  border-top: 1px solid #000;
  border-bottom: 1px solid #000;
  white-space: pre;
}
.tab.active {
  background: #fff;
  font-weight: 700;
  border-bottom-color: #fff;
}

/* status bar */
.status {
  display: flex;
  align-items: center;
  height: 19px;
  border-top: 1px solid #b8b8b8;
  background: #f0eeec;
  line-height: 19px;
  white-space: nowrap;
}
.help {
  flex: 1;
  padding-left: 2px;
}
.cell {
  box-sizing: border-box;
  height: 19px;
  padding-left: 4px;
  border-left: 1px solid #d0d0d0;
}
.acct {
  width: 51px;
  border-left: 0;
}
.psns {
  width: 91px;
}
.dtbp {
  width: 63px;
}
.purch {
  width: 87px;
}
.closed {
  width: 93px;
}
.rtte {
  width: 60px;
}
.openpl {
  width: 84px;
}
.order {
  width: 88px;
  color: #1e8a1e;
}
.macros {
  width: 68px;
  color: #1e8a1e;
}
.ball {
  width: 19px;
  padding-left: 3px;
}
.ball svg {
  width: 12px;
  height: 14px;
}
.clock {
  width: 124px;
}
</style>
